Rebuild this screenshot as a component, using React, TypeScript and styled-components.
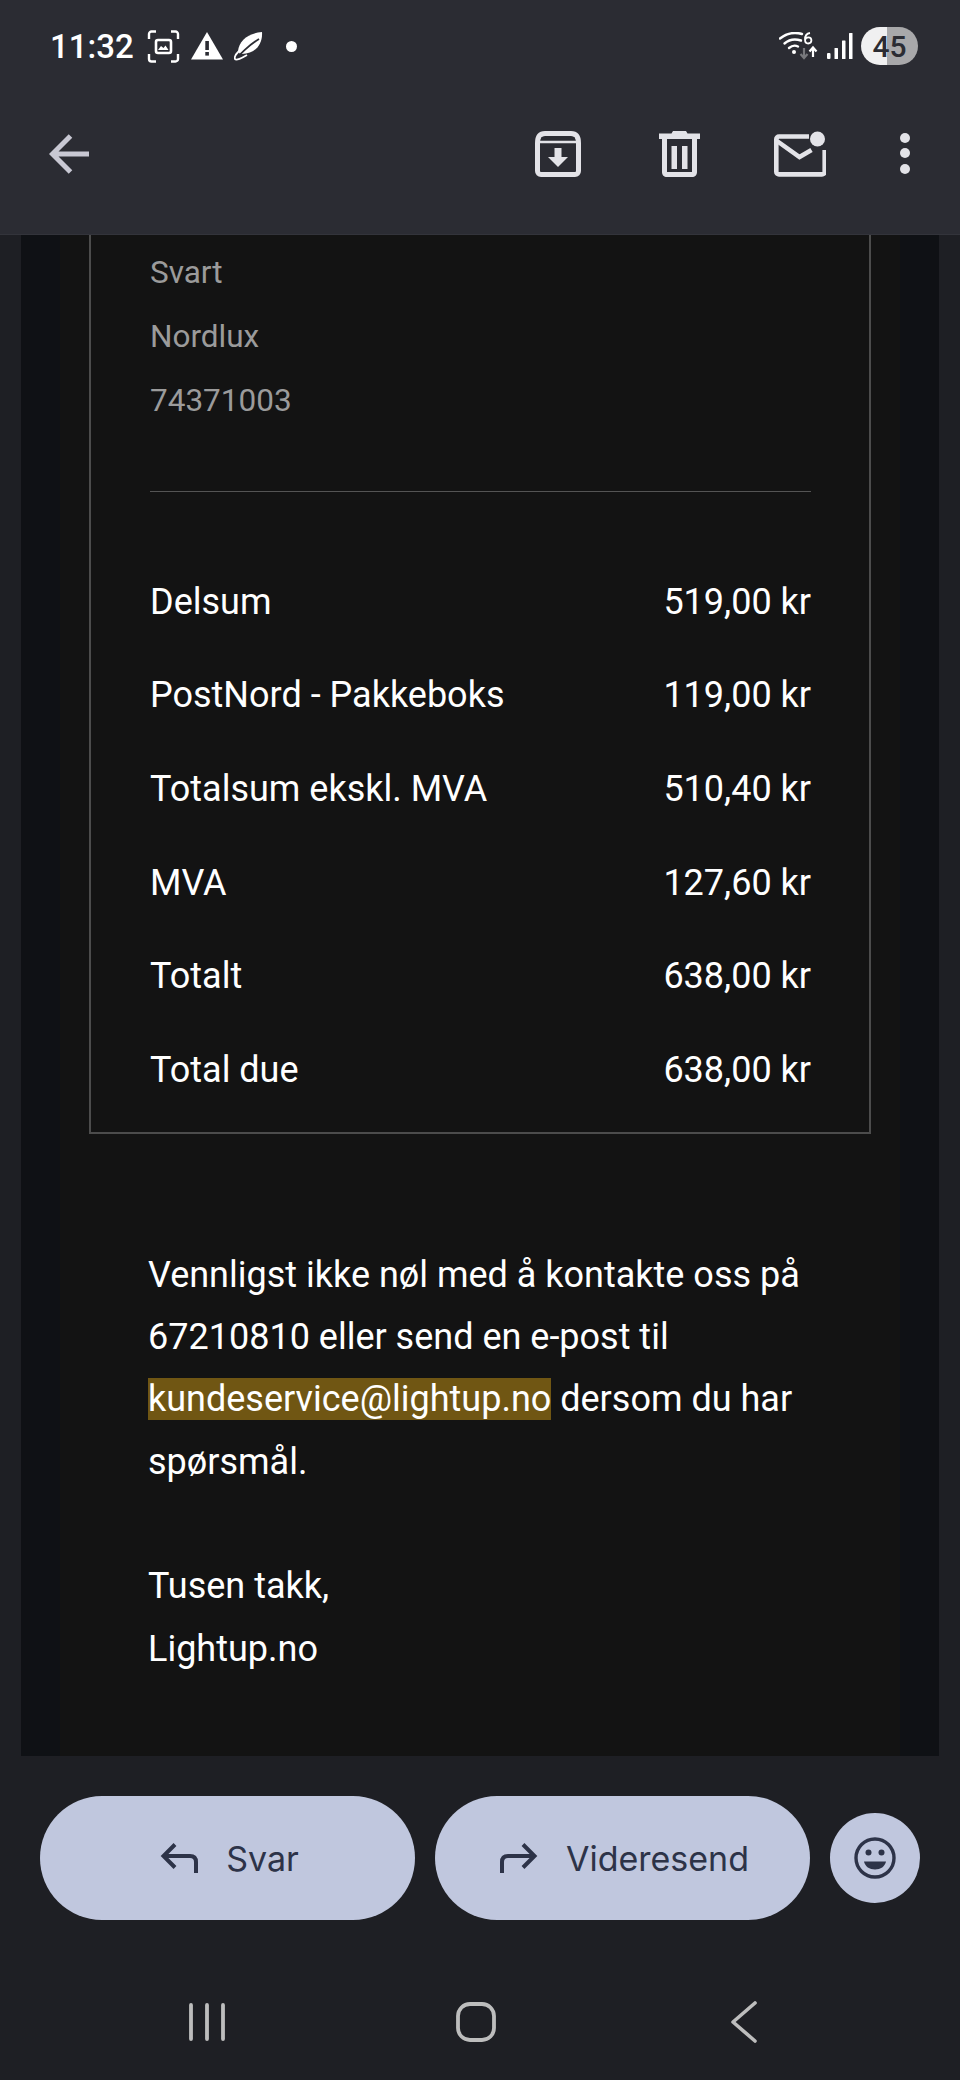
import * as React from 'react';
import styled, { createGlobalStyle } from 'styled-components';

const rows = [
  ['Delsum', '519,00 kr'],
  ['PostNord - Pakkeboks', '119,00 kr'],
  ['Totalsum ekskl. MVA', '510,40 kr'],
  ['MVA', '127,60 kr'],
  ['Totalt', '638,00 kr'],
  ['Total due', '638,00 kr'],
];

const App = () => {
  return (
    <Screen>
      <GlobalStyle />
      <TopBar>
        <StatusBar>
          <StatusLeft>
            <Clock>11:32</Clock>
            <svg width="33" height="33" viewBox="0 0 33 33" fill="none" stroke="#fff" strokeWidth="2.4">
              <path d="M2 9V4a2.500 2.500 0 0 1 2.500-2.500H9M24 1.500h4.500A2.500 2.500 0 0 1 31 4v5M31 24v5a2.500 2.500 0 0 1-2.500 2.500H24M9 31.500H4.500A2.500 2.500 0 0 1 2 29v-5" />
              <rect x="9" y="10" width="15" height="13" rx="2" strokeWidth="2.600" />
              <path d="M11 20l3-4 2.500 2 2-2.500 3 4.500z" fill="#fff" stroke="none" />
            </svg>
            <svg width="32" height="28" viewBox="0 0 32 28">
              <path d="M16 0L32 27.500H0z" fill="#fff" />
              <rect x="14.300" y="9" width="3.600" height="9" fill="#2b2c33" />
              <rect x="14.300" y="20" width="3.600" height="3.600" fill="#2b2c33" />
            </svg>
            <svg width="30" height="30" viewBox="0 0 30 30" fill="none">
              <path d="M4 20C5 10 14 2 28 1c1 13-8 23-22 22z" fill="#fff" />
              <path d="M1.500 28.500C5 24 15 14 25 8" stroke="#2b2c33" strokeWidth="1.800" />
              <path d="M5 20c-3 3-5 6-4 8s7-1 12-4" stroke="#fff" strokeWidth="1.800" />
            </svg>
            <StatusDot />
          </StatusLeft>
          <StatusRight>
            <svg width="40" height="28" viewBox="0 0 40 28" fill="none">
              <path d="M1 6.500C8 1 16 0 23 2" stroke="#fff" strokeWidth="2.400" strokeLinecap="round" />
              <path d="M5.500 11.500C10 7.500 16 6.500 22 8.500" stroke="#fff" strokeWidth="2.400" strokeLinecap="round" />
              <path d="M10 16c3-2.500 6-3 9-1.500" stroke="#fff" strokeWidth="2.400" strokeLinecap="round" />
              <circle cx="15" cy="20" r="2" fill="#fff" />
              <path d="M25 16v10M21.500 22l3.500 4 3.500-4" stroke="#77787c" strokeWidth="2.200" />
              <path d="M34 25v-9M30.500 19.500l3.500-4 3.500 4" stroke="#fff" strokeWidth="2.200" />
              <path d="M31 1c-3 .5-5 3-5 6.500 0 2.500 1.300 4 3.200 4s3.200-1.500 3.200-3.200-1.200-3-3-3-3 1.200-3.300 2.500" stroke="#fff" strokeWidth="1.800" />
            </svg>
            <svg width="26" height="27" viewBox="0 0 26 27" fill="#fff">
              <rect x="0" y="20" width="3.500" height="6" rx="1" />
              <rect x="7.500" y="15" width="3.500" height="11" rx="0.500" />
              <rect x="15" y="7.500" width="3.500" height="18.500" rx="0.500" />
              <rect x="22" y="0" width="3.500" height="26" rx="0.500" />
            </svg>
            <Battery>45</Battery>
          </StatusRight>
        </StatusBar>
        <ActionBar>
          <svg width="40" height="40" viewBox="0 0 40 40" fill="none" stroke="#c8c8d3" strokeWidth="5">
            <path d="M40 20H4M21.500 2L3.500 20l18 18" />
          </svg>
          <Actions>
            <svg width="46" height="46" viewBox="0 0 46 46" fill="none" stroke="#e3e3e8" strokeWidth="5">
              <path d="M2.500 12C2.500 6 5 2.500 10 2.500h26c5 0 7.500 3.500 7.500 9.500v28c0 2-1.500 3.500-3.500 3.500H6c-2 0-3.500-1.500-3.500-3.500z" />
              <path d="M3 11h40" strokeWidth="2.500" stroke="#e3e3e8" />
              <path d="M6 7.500h34" strokeWidth="2" stroke="#2b2c33" />
              <path d="M23 17v10" strokeWidth="7" />
              <path d="M13 26h20L23 36z" fill="#e3e3e8" stroke="none" />
            </svg>
            <ActionSlot $gap={78}>
              <svg width="41" height="46" viewBox="0 0 41 46" fill="#e3e3e8">
                <path d="M14 0h13l1.500 2.500H41V8H0V2.500h12.500z" />
                <path d="M3 8h35v33c0 3-2 5-5 5H8c-3 0-5-2-5-5zm5 0v33h25V8z" fillRule="evenodd" />
                <rect x="12.500" y="15" width="5.500" height="23" />
                <rect x="23" y="15" width="5.500" height="23" />
              </svg>
            </ActionSlot>
            <ActionSlot $gap={74}>
              <svg width="52" height="46" viewBox="0 0 52 46" fill="none" stroke="#e3e3e8" strokeWidth="4.600">
                <path d="M35 5.500H5c-1.500 0-2.700 1.200-2.700 2.700v32.500c0 1.500 1.200 2.700 2.700 2.700h43c1.500 0 2.700-1.200 2.700-2.700V19" />
                <path d="M3 10l22.500 16 12-7" />
                <circle cx="43.500" cy="8" r="7.500" fill="#e3e3e8" stroke="none" />
              </svg>
            </ActionSlot>
            <ActionSlot $gap={74}>
              <svg width="10" height="42" viewBox="0 0 10 42" fill="#e3e3e8">
                <circle cx="5" cy="5" r="5" />
                <circle cx="5" cy="20" r="5" />
                <circle cx="5" cy="36" r="5" />
              </svg>
            </ActionSlot>
          </Actions>
        </ActionBar>
      </TopBar>

      <MailFrame>
        <MailEdge>
          <MailBody>
            <OrderBox>
              <Meta>Svart</Meta>
              <Meta>Nordlux</Meta>
              <Meta>74371003</Meta>
              <Divider />
              {rows.map(([label, value]) => (
                <TotalRow key={label}>
                  <span>{label}</span>
                  <span>{value}</span>
                </TotalRow>
              ))}
            </OrderBox>
            <Message>
              Vennligst ikke nøl med å kontakte oss på 67210810 eller send en e-post til{' '}
              <Mark>kundeservice@lightup.no</Mark> dersom du har spørsmål.
            </Message>
            <Closing>
              Tusen takk,
              <br />
              Lightup.no
            </Closing>
          </MailBody>
        </MailEdge>
      </MailFrame>

      <BottomArea>
        <ReplyRow>
          <PillButton>
            <svg width="38" height="30" viewBox="0 0 38 30" fill="none" stroke="#2d3348" strokeWidth="4">
              <path d="M36 30V19c0-4-2-6-6-6H4M15 1.500L3.500 13 15 24.500" />
            </svg>
            Svar
          </PillButton>
          <PillButton>
            <svg width="38" height="30" viewBox="0 0 38 30" fill="none" stroke="#2d3348" strokeWidth="4">
              <path d="M2 30V19c0-4 2-6 6-6h26M23 1.500L34.500 13 23 24.500" />
            </svg>
            Videresend
          </PillButton>
          <EmojiButton>
            <svg width="42" height="42" viewBox="0 0 42 42" fill="none">
              <circle cx="21" cy="21" r="19" stroke="#2d3348" strokeWidth="3.400" />
              <circle cx="14.500" cy="15.500" r="3" fill="#2d3348" />
              <circle cx="27.500" cy="15.500" r="3" fill="#2d3348" />
              <path d="M10 24.500h22c-1 5-5.500 8-11 8s-10-3-11-8z" fill="#2d3348" />
            </svg>
          </EmojiButton>
        </ReplyRow>
        <NavBar>
          <svg width="36" height="38" viewBox="0 0 36 38" stroke="#bdbdbd" strokeWidth="3.800" strokeLinecap="round">
            <path d="M2 2v34M18 2v34M34 2v34" />
          </svg>
          <svg width="40" height="40" viewBox="0 0 40 40" fill="none" stroke="#bdbdbd" strokeWidth="3.800">
            <rect x="2" y="2" width="36" height="36" rx="12" />
          </svg>
          <svg width="26" height="42" viewBox="0 0 26 42" fill="none" stroke="#bdbdbd" strokeWidth="3.600" strokeLinecap="round" strokeLinejoin="round">
            <path d="M24 2L2 21l22 19" />
          </svg>
        </NavBar>
      </BottomArea>
    </Screen>
  );
};

export default App;

const GlobalStyle = createGlobalStyle`
  html, body {
    margin: 0;
    padding: 0;
    background: #1e1f24;
  }
  * {
    box-sizing: border-box;
  }
`;

const Screen = styled.div`
  width: 960px;
  height: 2080px;
  display: flex;
  flex-direction: column;
  overflow: hidden;
  background: #1e1f24;
  font-family: Roboto, "Liberation Sans", sans-serif;
`;

const TopBar = styled.header`
  height: 235px;
  flex: none;
  background: #2b2c33;
  border-bottom: 1px solid #33343b;
`;

const StatusBar = styled.div`
  height: 92px;
  display: flex;
  align-items: center;
  justify-content: space-between;
  padding: 0 42px 0 50px;
`;

const StatusLeft = styled.div`
  display: flex;
  align-items: center;
  gap: 11px;
`;

const Clock = styled.span`
  font-size: 33px;
  font-weight: 500;
  color: #fff;
  margin-right: 2px;
`;

const StatusDot = styled.span`
  width: 11px;
  height: 11px;
  border-radius: 50%;
  background: #fff;
  margin-left: 11px;
`;

const StatusRight = styled.div`
  display: flex;
  align-items: center;
  gap: 8px;
`;

const Battery = styled.span`
  width: 57px;
  height: 38px;
  border-radius: 19px;
  display: flex;
  align-items: center;
  justify-content: center;
  background: linear-gradient(90deg, #f0f0f1 0 45%, #a8a8aa 45% 100%);
  color: #2b2c33;
  font-size: 30px;
  font-weight: 500;
`;

const ActionBar = styled.div`
  display: flex;
  align-items: center;
  justify-content: space-between;
  padding: 39px 50px 0 49px;
`;

const Actions = styled.div`
  display: flex;
  align-items: center;
`;

const ActionSlot = styled.div<{ $gap: number }>`
  display: flex;
  margin-left: ${(props) => props.$gap}px;
`;

const MailFrame = styled.main`
  flex: 1;
  min-height: 0;
  padding: 0 21px;
  background: #1e1f24;
`;

const MailEdge = styled.div`
  height: 100%;
  padding: 0 40px;
  background: #0f1115;
`;

const MailBody = styled.div`
  height: 100%;
  margin: 0 -1px;
  background: #131313;
  overflow: hidden;
`;

const OrderBox = styled.section`
  margin: 0 29px;
  padding: 6px 58px 15px 59px;
  border: 2px solid #4c4c4c;
  border-top: none;
`;

const Meta = styled.div`
  height: 64px;
  line-height: 64px;
  font-size: 31.5px;
  color: #9b9b9b;
`;

const Divider = styled.hr`
  height: 1px;
  margin: 58px 0 63px;
  border: none;
  background: #545454;
`;

const TotalRow = styled.div`
  height: 93.6px;
  display: flex;
  align-items: center;
  justify-content: space-between;
  font-size: 36px;
  color: #fff;
`;

const Message = styled.p`
  margin: 110px 0 0;
  padding: 0 80px 0 88px;
  font-size: 36px;
  line-height: 62.4px;
  color: #fff;
`;

const Mark = styled.span`
  background: #705613;
`;

const Closing = styled.p`
  margin: 62px 0 0;
  padding: 0 88px;
  font-size: 36px;
  line-height: 62.4px;
  color: #fff;
`;

const BottomArea = styled.footer`
  height: 324px;
  flex: none;
  background: #1e1f24;
`;

const ReplyRow = styled.div`
  display: flex;
  align-items: center;
  gap: 20px;
  padding: 40px 40px 0;
`;

const PillButton = styled.button`
  width: 375px;
  height: 124px;
  padding: 0 0 0 4px;
  border: none;
  border-radius: 62px;
  display: flex;
  align-items: center;
  justify-content: center;
  gap: 28px;
  background: #c0c7de;
  color: #2d3348;
  font-family: Inter, Roboto, sans-serif;
  font-size: 34px;
  font-weight: 400;
`;

const EmojiButton = styled.button`
  width: 90px;
  height: 90px;
  padding: 0;
  border: none;
  border-radius: 50%;
  display: flex;
  align-items: center;
  justify-content: center;
  background: #c0c7de;
`;

const NavBar = styled.nav`
  display: flex;
  align-items: center;
  justify-content: space-between;
  padding: 81px 203px 0 189px;

  svg:nth-child(2) {
    margin-right: 5px;
  }
`;
